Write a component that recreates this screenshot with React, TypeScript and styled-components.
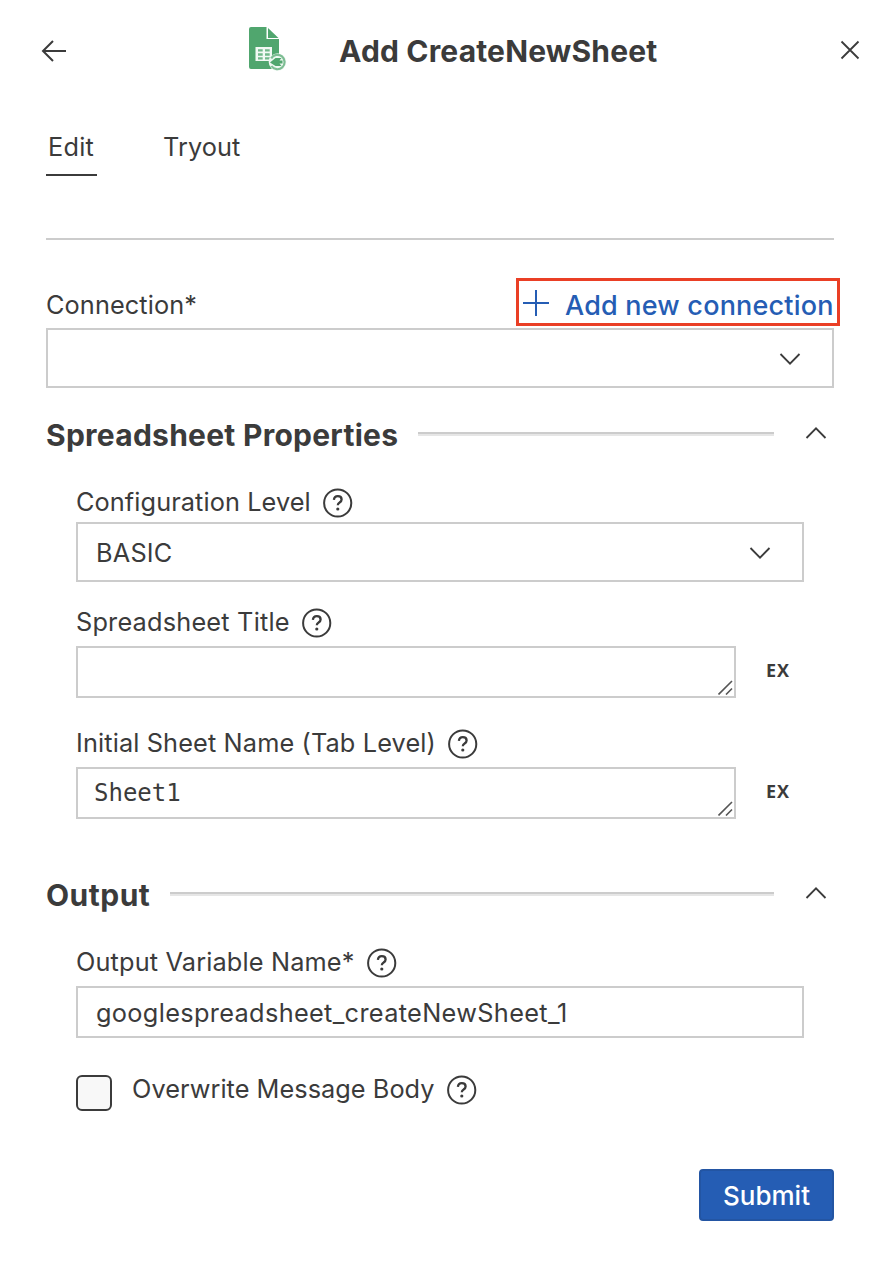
import React from "react";
import styled, { createGlobalStyle } from "styled-components";

const ink = "#3b3b3b";
const line = "#cccccc";
const blue = "#255db4";

const Global = createGlobalStyle`
  * { box-sizing: border-box; }
  body { margin: 0; background: #fff; }
`;

const Panel = styled.main`
  width: 888px;
  height: 1278px;
  background: #fff;
  color: ${ink};
  font-family: Inter, "Liberation Sans", sans-serif;
  font-size: 25.3px;
  line-height: 30px;
  display: flex;
  flex-direction: column;
  svg { display: block; flex: none; }
`;

const Text = styled.span<{ $track?: number }>`
  white-space: nowrap;
  letter-spacing: ${(p) => p.$track ?? 0}px;
`;

const Header = styled.header`
  height: 102px;
  padding: 26px 28px 0 41px;
  display: flex;
  align-items: flex-start;
`;

const IconButton = styled.button<{ $top: number; $left?: string }>`
  border: 0;
  padding: 0;
  background: none;
  color: inherit;
  margin-top: ${(p) => p.$top}px;
  margin-left: ${(p) => p.$left ?? "0"};
`;

const Logo = styled.div`
  margin-left: 181px;
`;

const Title = styled.h1`
  margin: 7px 0 0 51px;
  font-size: 30px;
  line-height: 36px;
  font-weight: 700;
`;

const Content = styled.div`
  margin: 0 54px 0 46px;
  display: flex;
  flex-direction: column;
`;

const Tabs = styled.nav`
  display: flex;
  gap: 64px;
  height: 138px;
  padding-top: 30px;
  border-bottom: 2px solid ${line};
`;

const Tab = styled.div<{ $active?: boolean }>`
  height: 44px;
  padding: 0 3px 0 2px;
  border-bottom: 2px solid ${(p) => (p.$active ? ink : "transparent")};
`;

const ConnectionRow = styled.div`
  display: flex;
  justify-content: space-between;
  margin: 38px -6px 2px 0;
`;

const ConnectionLabel = styled.label`
  padding-top: 12px;
`;

const AddConnection = styled.button`
  width: 324px;
  height: 48px;
  border: 3px solid #ea3f25;
  background: none;
  padding: 2px 0 0 4px;
  display: flex;
  align-items: center;
  gap: 16px;
  color: ${blue};
  font: 500 27px/32px Inter, sans-serif;
`;

const AddText = styled.div`
  padding-top: 5px;
`;

const Box = styled.div<{ $height: number }>`
  flex: 1 0 auto;
  height: ${(p) => p.$height}px;
  border: 2px solid ${line};
  padding: 2px 31px 0 18px;
  display: flex;
  align-items: center;
  justify-content: space-between;
`;

const TextArea = styled(Box)`
  padding: 0 1px 1px 16px;
  align-items: flex-end;
  font-family: "DejaVu Sans Mono", monospace;
  font-size: 24px;
`;

const AreaValue = styled.div`
  align-self: center;
  padding-top: 1px;
`;

const SectionHead = styled.div<{ $top: number }>`
  display: flex;
  align-items: center;
  height: 30px;
  margin: ${(p) => p.$top}px 0 3px;
  padding-right: 7px;
  > svg { margin-bottom: 2px; }
`;

const SectionTitle = styled.h2`
  margin: 0 20px 0 0;
  padding-top: 2px;
  font-size: 30px;
  line-height: 36px;
  font-weight: 700;
`;

const Rule = styled.div`
  flex: 1;
  height: 4px;
  border-top: 2px solid ${line};
  background: #e6e6e6;
  margin: 0 31px 0 0;
`;

const Fields = styled.div`
  margin: 0 30px;
  display: flex;
  flex-direction: column;
`;

const FieldLabel = styled.label<{ $top: number; $gap: number }>`
  display: flex;
  align-items: center;
  height: 30px;
  gap: 12px;
  margin: ${(p) => p.$top}px 0 ${(p) => p.$gap}px;
  > span { padding-bottom: 2px; }
`;

const AreaRow = styled.div`
  display: flex;
  align-items: center;
  padding-right: 14px;
  gap: 30px;
`;

const ExButton = styled.button`
  border: 0;
  padding: 0 0 4px;
  background: none;
  color: ${ink};
  width: 24px;
  font: 700 18px/20px "Open Sans", sans-serif;
  letter-spacing: 1px;
`;

const CheckRow = styled.div`
  display: flex;
  gap: 20px;
  margin-top: 37px;
`;

const Checkbox = styled.div`
  width: 36px;
  height: 36px;
  border: 2px solid ${ink};
  border-radius: 6px;
  background: #f8f8f8;
`;

const Submit = styled.button`
  align-self: flex-end;
  width: 135px;
  height: 52px;
  margin-top: 58px;
  padding: 2px 0 0;
  border: 2px solid #2355a3;
  border-radius: 4px;
  background: ${blue};
  color: #fff;
  font: 500 26px/32px Inter, sans-serif;
`;

const Chevron = ({ up }: { up?: boolean }) => (
  <svg width="22" height="14" viewBox="0 0 22 14" fill="none" stroke={ink} strokeWidth="1.8">
    <path d={up ? "M1.5 12 11 2.3 20.5 12" : "M1.5 2 11 11.7 20.5 2"} />
  </svg>
);

const Help = () => (
  <svg width="30" height="30" viewBox="0 0 30 30" fill="none" stroke={ink}>
    <circle cx="14.7" cy="15" r="13.6" strokeWidth="2" />
    <path d="M10.9 11.8c.2-2.3 1.7-3.7 3.9-3.7s3.8 1.3 3.8 3.3c0 1.5-.8 2.3-2 3.1-1.3.8-1.8 1.4-1.8 2.8" strokeWidth="2.3" />
    <circle cx="14.8" cy="21" r="1.6" fill={ink} stroke="none" />
  </svg>
);

const Grip = () => (
  <svg width="15" height="15" viewBox="0 0 15 15" fill="none" stroke="#555" strokeWidth="1.6">
    <path d="M.5 14.5 14 1M8 14.5 14 8.5" />
  </svg>
);

const SheetLogo = () => (
  <svg width="40" height="46" viewBox="0 0 40 46">
    <path d="M3 1H18.5V13H31V43H3Q1 43 1 41V3Q1 1 3 1Z" fill="#50a66e" />
    <path d="M20 2 30.5 12H20Z" fill="#50a66e" />
    <path d="M7.5 21H24V35H7.5Z" fill="#f2f9f4" />
    <path d="M10 23.2h4.7v2.4H10zM17 23.2h4.7v2.4H17zM10 27.3h4.7v2.4H10zM17 27.3h4.7v2.4H17zM10 31.2h4.7v2.2H10zM17 31.2h4.7v2.2H17z" fill="#72b88a" />
    <circle cx="29.5" cy="36" r="8.8" fill="#eef7f1" />
    <path d="M23.2 32.4a7.2 7.2 0 1 1 .2 7.6" fill="none" stroke="#7dbd93" strokeWidth="2.2" />
    <path d="M22 36.4 27.5 32h6l-2 2.5h3v3h-3l2 2.5h-6Z" fill="#50a66e" />
  </svg>
);

export default function App() {
  return (
    <>
      <Global />
      <Panel>
        <Header>
          <IconButton $top={14} aria-label="Back">
            <svg width="26" height="22" viewBox="0 0 26 22" fill="none" stroke={ink} strokeWidth="2">
              <path d="M25 11H2M12 1 2 11l10 10" />
            </svg>
          </IconButton>
          <Logo><SheetLogo /></Logo>
          <Title><Text $track={0.17}>Add CreateNewSheet</Text></Title>
          <IconButton $top={14} $left="auto" aria-label="Close">
            <svg width="20" height="20" viewBox="0 0 20 20" fill="none" stroke={ink} strokeWidth="1.8">
              <path d="M1.5 1.5 18.5 18.5M18.5 1.5 1.5 18.5" />
            </svg>
          </IconButton>
        </Header>
        <Content>
          <Tabs>
            <Tab $active><Text $track={0.25}>Edit</Text></Tab>
            <Tab><Text $track={0.05}>Tryout</Text></Tab>
          </Tabs>
          <ConnectionRow>
            <ConnectionLabel><Text $track={0.1}>Connection*</Text></ConnectionLabel>
            <AddConnection>
              <svg width="26" height="26" viewBox="0 0 26 26" stroke={blue} strokeWidth="2">
                <path d="M0 13H26M13 0V26" />
              </svg>
              <AddText><Text $track={0.2}>Add new connection</Text></AddText>
            </AddConnection>
          </ConnectionRow>
          <Box $height={60}><span /><Chevron /></Box>

          <SectionHead $top={31}>
            <SectionTitle><Text $track={0.26}>Spreadsheet Properties</Text></SectionTitle>
            <Rule />
            <Chevron up />
          </SectionHead>
          <Fields>
            <FieldLabel $top={36} $gap={4}><Text $track={0.09}>Configuration Level</Text><Help /></FieldLabel>
            <Box $height={60}><Text $track={0.2}>BASIC</Text><Chevron /></Box>
            <FieldLabel $top={26} $gap={8}><Text $track={0.2}>Spreadsheet Title</Text><Help /></FieldLabel>
            <AreaRow>
              <TextArea $height={52}><span /><Grip /></TextArea>
              <ExButton>EX</ExButton>
            </AreaRow>
            <FieldLabel $top={31} $gap={8}><Text $track={0.13}>Initial Sheet Name (Tab Level)</Text><Help /></FieldLabel>
            <AreaRow>
              <TextArea $height={52}><AreaValue><Text>Sheet1</Text></AreaValue><Grip /></TextArea>
              <ExButton>EX</ExButton>
            </AreaRow>
          </Fields>

          <SectionHead $top={60}>
            <SectionTitle><Text $track={0.5}>Output</Text></SectionTitle>
            <Rule />
            <Chevron up />
          </SectionHead>
          <Fields>
            <FieldLabel $top={36} $gap={8}><Text $track={0.15}>Output Variable Name*</Text><Help /></FieldLabel>
            <Box $height={52}><Text $track={0.34}>googlespreadsheet_createNewSheet_1</Text></Box>
            <CheckRow>
              <Checkbox />
              <FieldLabel $top={0} $gap={0}><Text $track={0.04}>Overwrite Message Body</Text><Help /></FieldLabel>
            </CheckRow>
          </Fields>
          <Submit><Text>Submit</Text></Submit>
        </Content>
      </Panel>
    </>
  );
}
